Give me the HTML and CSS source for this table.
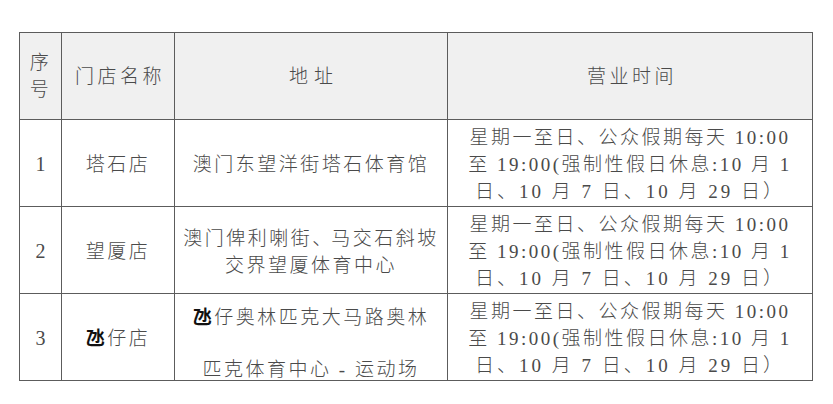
FILE: index.html
```html
<!DOCTYPE html>
<html lang="zh-CN">
<head>
<meta charset="utf-8">
<title>门店营业时间</title>
<link rel="stylesheet" href="styles.css">
</head>
<body>
<div class="page">
  <table class="stores">
    <colgroup>
      <col class="c-no">
      <col class="c-name">
      <col class="c-addr">
      <col class="c-time">
    </colgroup>
    <thead>
      <tr>
        <th class="no-head"><span class="line">序</span><span class="line">号</span></th>
        <th class="wide">门店名称</th>
        <th class="wider">地址</th>
        <th class="wide">营业时间</th>
      </tr>
    </thead>
    <tbody>
      <tr>
        <td class="num">1</td>
        <td>塔石店</td>
        <td>澳门东望洋街塔石体育馆</td>
        <td class="time">
          <span class="line">星期一至日、公众假期每天 10:00</span>
          <span class="line">至 19:00(强制性假日休息:10 月 1</span>
          <span class="line last">日、10 月 7 日、10 月 29 日）</span>
        </td>
      </tr>
      <tr>
        <td class="num">2</td>
        <td>望厦店</td>
        <td class="addr2">
          <span class="line">澳门俾利喇街<span class="comma">、</span>马交石斜坡</span>
          <span class="line">交界望厦体育中心</span>
        </td>
        <td class="time">
          <span class="line">星期一至日、公众假期每天 10:00</span>
          <span class="line">至 19:00(强制性假日休息:10 月 1</span>
          <span class="line last">日、10 月 7 日、10 月 29 日）</span>
        </td>
      </tr>
      <tr>
        <td class="num">3</td>
        <td><span class="tam">氹</span>仔店</td>
        <td class="addr3">
          <span class="line"><span class="tam">氹</span>仔奥林匹克大马路奥林</span>
          <span class="line second">匹克体育中心 - 运动场</span>
        </td>
        <td class="time">
          <span class="line">星期一至日、公众假期每天 10:00</span>
          <span class="line">至 19:00(强制性假日休息:10 月 1</span>
          <span class="line last">日、10 月 7 日、10 月 29 日）</span>
        </td>
      </tr>
    </tbody>
  </table>
</div>
</body>
</html>
```

FILE: styles.css
```css
html, body {
  margin: 0;
  padding: 0;
  background: #ffffff;
}

.page {
  padding: 32px 0 0 19px;
}

.stores {
  border-collapse: collapse;
  table-layout: fixed;
  width: 793px;
  font-family: "Liberation Serif", "Noto Sans CJK SC", serif;
  font-size: 19px;
  font-weight: 300;
  letter-spacing: 2.5px;
  color: #4a4a4a;
}

.c-no { width: 42px; }
.c-name { width: 113px; }
.c-addr { width: 273px; }
.c-time { width: 365px; }

.stores tr {
  height: 87px;
}

.stores th,
.stores td {
  border: 1px solid #5c5c5c;
  padding: 0;
  text-align: center;
  vertical-align: middle;
  line-height: 27px;
  white-space: nowrap;
}

.stores th {
  background: #f0f0f0;
  font-weight: 300;
}

.stores th.wide {
  letter-spacing: 3.5px;
  padding-left: 4px;
}

.stores th.wider {
  letter-spacing: 6px;
  padding-left: 6px;
}

.no-head {
  line-height: 30px;
  padding-bottom: 4px;
}

.line {
  display: block;
}

.time .last {
  letter-spacing: 3px;
}

.num {
  font-size: 20px;
  letter-spacing: 0;
  padding-top: 4px;
}

.stores td {
  padding-top: 3px;
}

.comma {
  letter-spacing: -6px;
  margin-right: 6px;
}

.stores td.addr3 {
  line-height: 20px;
  vertical-align: top;
  padding-top: 14px;
}

.addr3 .second {
  margin-top: 32px;
}

.tam {
  font-weight: 700;
  color: #111111;
}
```
